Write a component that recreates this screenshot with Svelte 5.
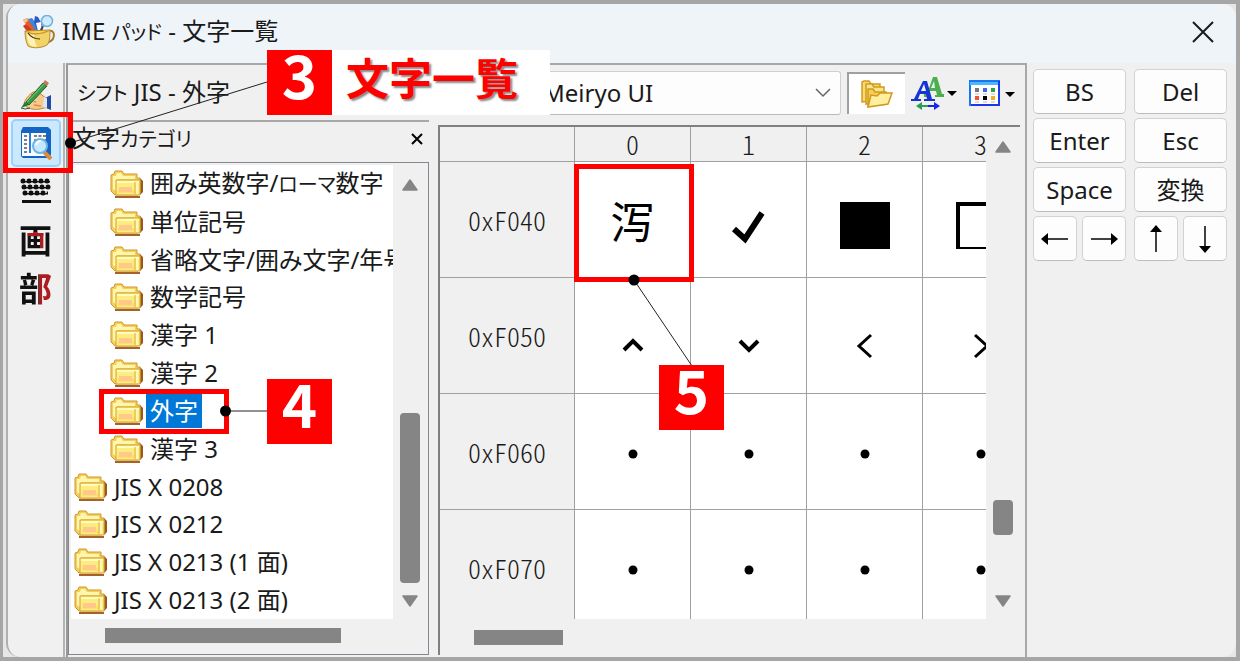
<script lang="ts">
  interface Category {
    label: string;
    depth: number;
  }

  const categories: Category[] = [
    { label: "囲み英数字/ローマ数字", depth: 1 },
    { label: "単位記号", depth: 1 },
    { label: "省略文字/囲み文字/年号", depth: 1 },
    { label: "数学記号", depth: 1 },
    { label: "漢字 1", depth: 1 },
    { label: "漢字 2", depth: 1 },
    { label: "外字", depth: 1 },
    { label: "漢字 3", depth: 1 },
    { label: "JIS X 0208", depth: 0 },
    { label: "JIS X 0212", depth: 0 },
    { label: "JIS X 0213 (1 面)", depth: 0 },
    { label: "JIS X 0213 (2 面)", depth: 0 },
  ];

  const columns = ["0", "1", "2", "3"];
  const rows = [
    { code: "0xF040", cells: ["泻", "check", "square", "box"] },
    { code: "0xF050", cells: ["up", "down", "left", "right"] },
    { code: "0xF060", cells: ["dot", "dot", "dot", "dot"] },
    { code: "0xF070", cells: ["dot", "dot", "dot", "dot"] },
  ];

  const keys = ["BS", "Del", "Enter", "Esc", "Space", "変換"];
  const arrows = [
    [
      { label: "左", angle: 180 },
      { label: "右", angle: 0 },
    ],
    [
      { label: "上", angle: 270 },
      { label: "下", angle: 90 },
    ],
  ];

  let selected = $state("外字");
  let font = $state("Meiryo UI");

  // odd parts are the katakana runs
  function splitKana(text: string) {
    return text.split(/([ァ-ヶー]+)/);
  }
</script>

{#snippet compact(text: string)}
  {#each splitKana(text) as part, i}{#if i % 2}<span class="kana">{part}</span>{:else}{part}{/if}{/each}
{/snippet}

{#snippet folder()}
  <svg class="folder" width="34" height="28" viewBox="0 0 34 28" aria-hidden="true">
    <path d="M5 25h25l3-3V11l-3-3v15H5z" fill="#99591c" />
    <path d="M5 26h25v2H5z" fill="#a5622a" />
    <path d="M1 5l3-1 1-3h7l2 3h13v4h3v15l-2 2H5l-4-4z" fill="#f6cf58" stroke="#cf972e" />
    <path d="M3 6h3l1-3h4l2 3h12v3H7v13l-4-3z" fill="#fdf6ae" />
    <path d="M6 10h24v15H6z" fill="#fdec80" stroke="#d6a136" />
    <path d="M7 11h22v2H7z" fill="#fffcc0" />
    <path d="M8 20h17v3H8z" fill="#ffdf72" />
    <path d="M9 17h13v5H9z" fill="#ffc98a" />
    <path d="M25 12v12" stroke="#dcae3c" stroke-width="1" />
    <path d="M27 12v12" stroke="#fff9b8" stroke-width="2" />
  </svg>
{/snippet}

{#snippet triangle(dir: string)}
  <svg width="16" height="12" viewBox="0 0 16 12" aria-hidden="true">
    <path
      d={dir === "up" ? "M8 1L15 11H1z" : "M8 11L15 1H1z"}
      fill="#858585"
      stroke="#858585"
      stroke-width="1.5"
      stroke-linejoin="round"
    />
  </svg>
{/snippet}

{#snippet glyph(name: string)}
  <svg class="glyph" width="60" height="72" viewBox="0 0 60 72" aria-hidden="true">
    {#if name === "check"}
      <path d="M15 45l11 10 17-26" fill="none" stroke="#000" stroke-width="6" />
    {:else if name === "square"}
      <path d="M5 18h50v47H5z" />
    {:else if name === "box"}
      <path d="M5 18h50v47H5zM9 22v41h42V22z" fill-rule="evenodd" />
    {:else if name === "up"}
      <path d="M21 50l9-9 9 9" fill="none" stroke="#000" stroke-width="4" />
    {:else if name === "down"}
      <path d="M21 41l9 9 9-9" fill="none" stroke="#000" stroke-width="4" />
    {:else if name === "left"}
      <path d="M36 35L24 46l12 11" fill="none" stroke="#000" stroke-width="3" />
    {:else if name === "right"}
      <path d="M24 35l12 11-12 11" fill="none" stroke="#000" stroke-width="3" />
    {:else}
      <circle cx="30" cy="38" r="4.5" />
    {/if}
  </svg>
{/snippet}

<div class="frame">
  <div class="window">
    <header class="titlebar">
      <svg class="app-icon" width="34" height="34" viewBox="0 0 34 34" aria-hidden="true">
        <path d="M1 5l4-2 11 13-5 3z" fill="#e35a2b" />
        <path d="M1 5l4-2 1 3-3 2z" fill="#f1c58e" />
        <path d="M6 4l4-1 9 12-5 2z" fill="#3b87d8" />
        <path d="M1 11l3-2 8 8-5 2z" fill="#d23a1e" />
        <path d="M13 1l3 1 4 7 1 7-6-1-3-8z" fill="#3059c8" />
        <path d="M14 8l5-1 1 8-4 1z" fill="#fff" />
        <path d="M21 11l-3 6" stroke="#444" stroke-width="2" />
        <circle cx="25" cy="6" r="5.5" fill="#c9ecff" stroke="#78afd8" stroke-width="1.5" />
        <path d="M27 16c6-2 7 8 0 11" fill="none" stroke="#a9792b" stroke-width="2" />
        <path d="M3 16c0 6 1 11 3 15 5 3 16 2 20-2 2-4 2-9 2-14z" fill="#f2d368" stroke="#b98a2d" />
        <path d="M5 19c0 5 1 8 3 11 2 1 5 2 7 2-2-4-3-8-3-12z" fill="#fff3b8" />
        <path d="M3 16q12 6 25-1" fill="none" stroke="#c9992f" stroke-width="1.3" />
        <path d="M6 18c2 3 6 6 12 6" fill="none" stroke="#3c3013" stroke-width="1.2" />
      </svg>
      <h1>{@render compact("IME パッド - 文字一覧")}</h1>
      <button class="close" aria-label="閉じる">
        <svg width="22" height="22" viewBox="0 0 22 22" aria-hidden="true">
          <path d="M1 1l20 20M21 1L1 21" stroke="#1a1a1a" stroke-width="2" />
        </svg>
      </button>
    </header>

    <div class="content">
      <nav class="modes">
        <button aria-label="手書き">
          <svg width="32" height="32" viewBox="0 0 32 32" aria-hidden="true">
            <path d="M4 25c1-5 5-9 9-12h5l8 6 2 9-8 2c-6 1-13 0-16-5z" fill="#f6c98c" stroke="#c98039" />
            <path d="M11 15l6 3M8 21l8 2M14 26l7 1" stroke="#d5904c" stroke-width="1.5" />
            <path d="M6 25c2-3 4-6 7-7l3 2-6 6z" fill="#ffe3b5" />
            <path d="M25 19l6-3v15l-5-2z" fill="#224c9f" />
            <path d="M24 18l3 1v10l-4-1z" fill="#dbe7fa" />
            <path d="M6 23L23 4l4 3L9 26z" fill="#3a9b46" stroke="#19662a" />
            <path d="M7 23L24 5" stroke="#84cf86" />
            <path d="M23 4l2-3 4 3-2 3z" fill="#c77a5a" />
            <path d="M5 23l4 3-8 3z" fill="#1c7c36" />
            <path d="M1 29q4 2 9 0" stroke="#444" fill="none" />
          </svg>
        </button>
        <button class="active" aria-label="文字一覧">
          <svg width="34" height="34" viewBox="0 0 34 34" aria-hidden="true">
            <path d="M2 5l2-4h25l3 3v25l-3 3H4l-2-2z" fill="#1464c3" />
            <path d="M3 7h24v23H3z" fill="#f8fbff" />
            <path d="M10 7h2v20h-2z" fill="#2b7ede" />
            <path
              d="M5 10h3M5 14h3M5 18h3M5 22h3M5 26h3M15 10h12M15 14h12"
              stroke="#555"
              stroke-width="1.5"
              stroke-dasharray="3 1.5"
            />
            <path d="M25 26l7 7" stroke="#e18b35" stroke-width="4" />
            <circle cx="21" cy="20" r="7" fill="#c4eaff" stroke="#70b3e5" stroke-width="2" />
            <path d="M17 19q1-4 5-4" stroke="#fff" stroke-width="2" fill="none" />
          </svg>
        </button>
        <button aria-label="ソフト キーボード">
          <svg width="32" height="26" viewBox="0 0 32 26" aria-hidden="true">
            <path
              d="M3 3h28M4 9h26M5 15h24"
              stroke="#111"
              stroke-width="5"
              stroke-linecap="round"
              stroke-dasharray="0 6"
            />
            <path d="M2 3h28M3 9h26M4 15h24" stroke="#111" stroke-width="3" />
            <path d="M5 2h26M6 8h24M7 14h20" stroke="#f0f0f0" stroke-width="1.5" stroke-dasharray="2 4" />
            <path d="M2 22h29v3H2z" fill="#111" />
          </svg>
        </button>
        <button><span class="two-tone strokes">画</span></button>
        <button><span class="two-tone radical">部</span></button>
      </nav>

      <main class="pane">
        <div class="toolbar">
          <h2>{@render compact("シフト JIS - 外字")}</h2>
          <div class="font-picker">
            <select aria-label="フォント" bind:value={font}>
              <option>Meiryo UI</option>
            </select>
            <svg width="16" height="10" viewBox="0 0 16 10" aria-hidden="true">
              <path d="M1 1l7 7 7-7" fill="none" stroke="#666" stroke-width="1.5" />
            </svg>
          </div>
          <button class="tool pressed" aria-label="文字カテゴリ表示">
            <svg width="32" height="28" viewBox="0 0 32 28" aria-hidden="true">
              <g stroke="#d19a1e" stroke-width="1.5" fill="#f8db6d">
                <path d="M1 22V2l2-1h5l2 3h9v16z" />
                <path d="M5 24V4h6l2 3h10v14z" fill="#fae68c" />
                <path d="M7 26V9h5l2 3h11l1 3v9z" fill="#f6ce55" />
                <path d="M7 27l3-12 6 1 3-3h12l-4 11z" fill="#fff0a0" />
              </g>
            </svg>
          </button>
          <button class="tool" aria-label="文字サイズ">
            <svg width="46" height="34" viewBox="0 0 46 34" aria-hidden="true">
              <path
                d="M13 18h3l6-17h4l5 17h2v3h-9v-2h2l-1-4h-6l-1 4h2v2h-7zM20 12h4l-1-7z"
                fill="#4baf50"
                fill-rule="evenodd"
              />
              <path
                d="M0 23h3L12 5h4l5 18h3v2H13v-2h3l-1-5H9l-2 5h3v2H0zM10 15h5l-2-7z"
                fill="#1534d4"
                fill-rule="evenodd"
              />
              <path d="M8 30h10" stroke="#2f9c53" stroke-width="2" />
              <path d="M17 30h8" stroke="#1427ef" stroke-width="2" />
              <path d="M5 30l6-4v8z" fill="#2f9c53" />
              <path d="M29 30l-6-4v8z" fill="#1427ef" />
              <path d="M36 15h10l-5 5z" />
            </svg>
          </button>
          <button class="tool" aria-label="表示形式">
            <svg width="46" height="26" viewBox="0 0 46 26" aria-hidden="true">
              <path d="M1 1h29v24H1z" fill="#fff" stroke="#1478f5" stroke-width="2" />
              <path d="M1 1h29v4H1z" fill="#4eb5ff" />
              <path d="M0 1h31" stroke="#1478f5" stroke-width="2" />
              <path d="M30 1v24H2" fill="none" stroke="#1a3af0" stroke-width="2" />
              <path d="M6 8h4v4H6z" fill="#777" />
              <path d="M14 8h4v4h-4z" fill="#3b67f2" />
              <path d="M22 8h4v4h-4z" fill="#27a34a" />
              <path d="M6 16h4v4H6z" fill="#f0532d" />
              <path d="M14 16h4v4h-4z" fill="#000" />
              <path d="M22 16h4v4h-4z" fill="#e8b123" />
              <path d="M6 14h4M14 14h4M22 14h4M6 22h4M14 22h4M22 22h4" stroke="#bbb" />
              <path d="M36 12h10l-5 5z" />
            </svg>
          </button>
        </div>

        <div class="split">
          <section class="categories">
            <div class="categories-header">
              <h3>{@render compact("文字カテゴリ")}</h3>
              <button aria-label="カテゴリを閉じる">
                <svg width="12" height="12" viewBox="0 0 12 12" aria-hidden="true">
                  <path d="M1 1l10 10M11 1L1 11" stroke="#000" stroke-width="2" />
                </svg>
              </button>
            </div>
            <div class="tree-box">
              <ul class="tree">
                {#each categories as category (category.label)}
                  <li class:nested={category.depth > 0}>
                    <button
                      class:selected={selected === category.label}
                      onclick={() => (selected = category.label)}
                    >
                      {@render folder()}
                      <span class="label">{@render compact(category.label)}</span>
                    </button>
                  </li>
                {/each}
              </ul>
              <div class="vbar">
                {@render triangle("up")}
                <div class="track end"><i class="thumb tall"></i></div>
                {@render triangle("down")}
              </div>
              <div class="hbar"><i class="thumb wide"></i></div>
            </div>
          </section>

          <section class="chart">
            <div class="chart-view">
              <table>
                <thead>
                  <tr>
                    <th class="corner"></th>
                    {#each columns as column (column)}
                      <th scope="col">{column}</th>
                    {/each}
                  </tr>
                </thead>
                <tbody>
                  {#each rows as row (row.code)}
                    <tr>
                      <th scope="row">{row.code}</th>
                      {#each row.cells as cell}
                        <td>
                          {#if cell === "泻"}
                            <span class="kanji">{cell}</span>
                          {:else}
                            {@render glyph(cell)}
                          {/if}
                        </td>
                      {/each}
                    </tr>
                  {/each}
                </tbody>
              </table>
            </div>
            <div class="vbar">
              {@render triangle("up")}
              <div class="track low"><i class="thumb short"></i></div>
              {@render triangle("down")}
            </div>
            <div class="hbar"><i class="thumb narrow"></i></div>
          </section>
        </div>
      </main>

      <aside class="keypad">
        {#each keys as key (key)}
          <button>{key}</button>
        {/each}
        {#each arrows as pair}
          <div class="arrow-pair">
            {#each pair as arrow (arrow.label)}
              <button aria-label={arrow.label}>
                <svg width="28" height="28" viewBox="0 0 28 28" aria-hidden="true">
                  <g transform="rotate({arrow.angle} 14 14)">
                    <path d="M1 14h22" stroke="#000" stroke-width="1.5" />
                    <path d="M21 8l7 6-7 6z" />
                  </g>
                </svg>
              </button>
            {/each}
          </div>
        {/each}
      </aside>
    </div>
  </div>

  <div class="callouts">
    <svg width="1240" height="661" viewBox="0 0 1240 661" aria-hidden="true">
      <g fill="none" stroke="#f00" stroke-width="5">
        <rect x="5.5" y="114.5" width="65" height="56" />
        <rect x="101.5" y="391.5" width="125" height="40" />
        <rect x="576.5" y="166.5" width="115" height="113" />
      </g>
      <path d="M70 143L267 82M225 411h42M634 280l58 86" stroke="#222" fill="none" />
      <circle cx="70.5" cy="143" r="5.5" />
      <circle cx="225.5" cy="411" r="5.5" />
      <circle cx="634" cy="280" r="5.5" />
    </svg>
    <div class="step three"><b>3</b><strong>文字一覧</strong></div>
    <div class="step four"><b>4</b></div>
    <div class="step five"><b>5</b></div>
  </div>
</div>

<style>
  :global(body) {
    margin: 0;
  }

  .frame {
    position: relative;
    box-sizing: border-box;
    height: 100vh;
    min-height: 640px;
    padding-left: 3px;
    overflow: hidden;
    border: 4px solid #a6a6a6;
    border-left-width: 3px;
    background: #e6e6e6;
    color: #1a1a1a;
    font-family: "Noto Sans", "Noto Sans CJK JP", sans-serif;
    font-size: 24px;
    line-height: 32px;
    font-feature-settings: "palt";
  }

  button,
  select {
    margin: 0;
    padding: 0;
    border: 0;
    background: none;
    color: inherit;
    font: inherit;
    font-feature-settings: inherit;
  }

  svg {
    display: block;
    flex: none;
  }

  h1,
  h2,
  h3 {
    margin: 0;
    font-size: 24px;
    font-weight: 400;
    white-space: nowrap;
  }

  .kana {
    font-size: 20px;
  }

  .window {
    display: flex;
    flex-direction: column;
    box-sizing: border-box;
    height: 100%;
    overflow: hidden;
    border-left: 2px solid #b0b0b0;
    border-radius: 14px;
    background: #f0f0f0;
  }

  .titlebar {
    display: flex;
    flex: none;
    align-items: center;
    gap: 6px;
    height: 59px;
    padding: 0 22px 4px 14px;
    box-sizing: border-box;
    background: #eff4f9;
  }

  .close {
    margin-left: auto;
  }

  .content {
    display: flex;
    flex: 1;
    min-height: 0;
  }

  .modes {
    display: flex;
    flex-direction: column;
    flex: none;
    align-items: center;
    width: 55px;
    padding-top: 8px;
    border-right: 2px solid #b4b4b4;
  }

  .modes button {
    display: flex;
    align-items: center;
    justify-content: center;
    width: 50px;
    height: 48px;
    box-sizing: border-box;
  }

  .modes .active {
    border: 2px solid #99d1ff;
    border-radius: 5px;
    background: #cce8ff;
  }

  .two-tone {
    background-clip: text;
    -webkit-background-clip: text;
    color: transparent;
    font-family: "Noto Sans CJK JP", sans-serif;
    font-size: 33px;
    font-weight: 700;
    line-height: 44px;
  }

  .radical {
    background-image: linear-gradient(90deg, #111 60%, #ad1a20 60%);
  }

  .strokes {
    background-color: #111;
    background-image: linear-gradient(#ad1a20, #ad1a20), linear-gradient(#ad1a20, #ad1a20);
    background-position: 8px 15px, 21px 15px;
    background-repeat: no-repeat;
    background-size: 17px 4px, 5px 17px;
  }

  .pane {
    display: flex;
    flex-direction: column;
    flex: 1;
    min-width: 0;
    margin-left: 1px;
    border-top: 2px solid #a8a8a8;
    border-left: 2px solid #989898;
  }

  .toolbar {
    display: flex;
    flex: none;
    align-items: center;
    height: 55px;
    padding: 0 4px 0 9px;
  }

  .toolbar h2 {
    margin-right: auto;
  }

  .font-picker {
    display: grid;
    align-items: center;
    width: 305px;
    margin-right: 6px;
  }

  .font-picker > * {
    grid-area: 1 / 1;
  }

  .font-picker > svg {
    justify-self: end;
    margin-right: 10px;
    pointer-events: none;
  }

  .font-picker select {
    appearance: none;
    height: 44px;
    padding: 0 6px;
    border: 1px solid #d0d0d0;
    border-bottom-color: #bbb;
    border-radius: 3px;
    background: #fdfdfd;
  }

  .tool {
    display: flex;
    align-items: center;
    justify-content: center;
    width: 58px;
    height: 42px;
  }

  .tool.pressed {
    box-sizing: border-box;
    border-top: 2px solid #a0a0a0;
    border-left: 2px solid #a0a0a0;
    background: #fff;
  }

  .split {
    display: flex;
    flex: 1;
    gap: 9px;
    min-height: 0;
    padding: 0 5px 2px 0;
  }

  .categories {
    display: flex;
    flex-direction: column;
    flex: none;
    width: 361px;
    border-top: 2px solid #a8a8a8;
  }

  .categories-header {
    display: flex;
    align-items: center;
    justify-content: space-between;
    flex: none;
    height: 40px;
    padding: 0 6px 6px 4px;
    box-sizing: border-box;
  }

  .tree-box {
    display: grid;
    grid-template: minmax(0, 1fr) 33px / minmax(0, 1fr) 33px;
    flex: 1;
    min-height: 0;
    padding: 2px;
    border: 1px solid #828790;
    box-sizing: border-box;
    background: #f0f0f0;
  }

  .tree {
    display: flex;
    flex-direction: column;
    margin: 0;
    padding: 0;
    overflow: hidden;
    background: #fff;
    list-style: none;
  }

  .tree li {
    display: flex;
    flex: 1;
    min-height: 0;
    padding-left: 3px;
  }

  .tree li.nested {
    padding-left: 39px;
  }

  .tree button {
    display: flex;
    align-items: center;
    gap: 2px;
    white-space: nowrap;
  }

  .label {
    padding: 1px 4px;
  }

  .selected .label {
    background: #0078d7;
    color: #fff;
  }

  .vbar {
    display: flex;
    flex-direction: column;
    align-items: center;
    padding: 14px 0 12px;
  }

  .track {
    display: flex;
    flex: 1;
    flex-direction: column;
    justify-content: flex-end;
  }

  .track.end {
    padding-bottom: 12px;
  }

  .track.low {
    padding-bottom: 60px;
  }

  .hbar {
    display: flex;
    grid-column: 1 / -1;
    align-items: center;
    padding-left: 34px;
  }

  .thumb {
    display: block;
    background: #858585;
  }

  .tall {
    width: 20px;
    height: 170px;
    border-radius: 4px;
  }

  .short {
    width: 20px;
    height: 35px;
    border-radius: 4px;
  }

  .wide {
    width: 236px;
    height: 15px;
  }

  .narrow {
    width: 89px;
    height: 15px;
  }

  .chart {
    display: grid;
    grid-template: minmax(0, 1fr) 36px / minmax(0, 1fr) 34px;
    flex: 1;
    min-width: 0;
    margin-top: 5px;
    border-top: 2px solid #808080;
    border-left: 2px solid #808080;
  }

  .chart-view {
    overflow: hidden;
    background: #fff;
  }

  table {
    width: 599px;
    border-collapse: separate;
    border-spacing: 0;
    table-layout: fixed;
  }

  th,
  td {
    box-sizing: border-box;
    width: 116px;
    height: 116px;
    padding: 0;
    border-right: 1px solid #a0a0a0;
    border-bottom: 1px solid #a0a0a0;
    text-align: center;
    vertical-align: middle;
  }

  th {
    background: #f0f0f0;
    color: #1a1a1a;
    font-family: "Noto Sans CJK JP", sans-serif;
    font-size: 26px;
    font-weight: 300;
    font-feature-settings: "hwid";
  }

  thead th {
    height: 35px;
  }

  .corner,
  th[scope="row"] {
    width: 135px;
  }

  .glyph {
    margin: 0 auto;
  }

  .kanji {
    color: #000;
    font-family: "Noto Sans CJK SC", sans-serif;
    font-size: 44px;
    line-height: 56px;
  }

  .keypad {
    display: grid;
    grid-template-columns: 1fr 1fr;
    flex: none;
    align-content: start;
    gap: 4px 8px;
    box-sizing: border-box;
    width: 211px;
    padding: 6px 9px 0 6px;
    border-left: 2px solid #a8a8a8;
  }

  .keypad button {
    display: flex;
    align-items: center;
    justify-content: center;
    height: 45px;
    box-sizing: border-box;
    border: 1px solid #d2d2d2;
    border-bottom-color: #bcbcbc;
    border-radius: 5px;
    background: #fdfdfd;
  }

  .arrow-pair {
    display: grid;
    grid-template-columns: 1fr 1fr;
    gap: 5px;
  }

  .callouts {
    position: absolute;
    top: -4px;
    left: -3px;
    pointer-events: none;
  }

  .step {
    position: absolute;
    display: flex;
    height: 65px;
    background: #fff;
    font-family: "Noto Sans CJK JP", sans-serif;
  }

  .step b {
    width: 65px;
    background: #f00;
    color: #fff;
    font-size: 60px;
    line-height: 46px;
    text-align: center;
  }

  .step strong {
    padding: 0 32px 0 14px;
    color: #f00;
    font-size: 43px;
    line-height: 52px;
    text-shadow: 2px 2px 2px #888;
    white-space: nowrap;
  }

  .three {
    top: 50px;
    left: 267px;
  }

  .four {
    top: 379px;
    left: 267px;
  }

  .five {
    top: 365px;
    left: 659px;
  }
</style>
